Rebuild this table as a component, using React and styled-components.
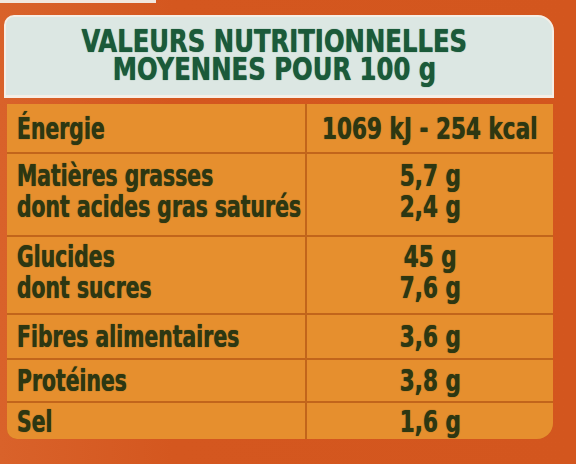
import React from 'react'
import styled, { createGlobalStyle } from 'styled-components'

const rows = [
  { h: 48, labels: ['Énergie'], values: ['1069 kJ - 254 kcal'] },
  {
    h: 81,
    labels: ['Matières grasses', 'dont acides gras saturés'],
    values: ['5,7 g', '2,4 g']
  },
  { h: 76, labels: ['Glucides', 'dont sucres'], values: ['45 g', '7,6 g'] },
  { h: 43, labels: ['Fibres alimentaires'], values: ['3,6 g'] },
  { h: 41, labels: ['Protéines'], values: ['3,8 g'] },
  { h: 36, labels: ['Sel'], values: ['1,6 g'] }
]

const App = () => (
  <Page>
    <GlobalStyle />
    <TopEdge />
    <Header>
      <HeadLine>VALEURS NUTRITIONNELLES</HeadLine>
      <HeadLine>MOYENNES POUR 100 g</HeadLine>
    </Header>
    <Table rows={rows.map(r => `${r.h}px`).join(' ')}>
      {rows.map((row, i) => {
        const multi = row.labels.length > 1
        return (
          <React.Fragment key={i}>
            <Cell $multi={multi}>
              {row.labels.map(l => (
                <Line key={l}>{l}</Line>
              ))}
            </Cell>
            <Cell $value $multi={multi}>
              {row.values.map(v => (
                <Line key={v} $value>
                  {v}
                </Line>
              ))}
            </Cell>
          </React.Fragment>
        )
      })}
    </Table>
  </Page>
)
export default App

const GlobalStyle = createGlobalStyle`
  body {
    margin: 0;
    background: #d4581f;
  }
`

const Page = styled.div`
  width: 576px;
  height: 464px;
  overflow: hidden;
  background: linear-gradient(90deg, #d9622a 0%, #d4571f 30%, #d3561e 100%);
  font-family: 'DejaVu Sans Condensed', 'DejaVu Sans', sans-serif;
  font-weight: bold;
`

const TopEdge = styled.div`
  width: 156px;
  height: 3px;
  background: #f1e7de;
`

const Header = styled.div`
  box-sizing: border-box;
  display: flex;
  flex-direction: column;
  align-items: center;
  margin: 12px 22px 0 4px;
  height: 83px;
  border: 2px solid #f5eee6;
  border-bottom-width: 3px;
  border-radius: 10px 16px 0 0;
  background: #dce7e3;
  color: #1b5a3a;
  font-size: 32px;
  line-height: 28px;
  padding: 10px 10px 0 0;
  text-shadow: 0 0 1px #1b5a3a;
`

const HeadLine = styled.div`
  width: max-content;
  white-space: nowrap;
  transform: scaleX(0.845);
`

const Table = styled.div`
  display: grid;
  grid-template-columns: 298px minmax(0, 1fr);
  grid-template-rows: ${p => p.rows};
  gap: 2px;
  margin: 6px 23px 0 7px;
  background: #c2651b;
  border-radius: 0 0 16px 10px;
  overflow: hidden;
`

const Cell = styled.div`
  display: flex;
  flex-direction: column;
  justify-content: center;
  align-items: ${p => (p.$value ? 'center' : 'flex-start')};
  min-width: 0;
  background: #e68f2e;
  color: #2d3712;
  font-size: 30px;
  line-height: 31px;
  padding-left: ${p => (p.$value ? 0 : 10)}px;
  padding-bottom: ${p => (p.$multi ? 7 : 0)}px;
  text-shadow: 0 0 1px #2d3712;
`

const Line = styled.div`
  width: max-content;
  white-space: nowrap;
  transform: scaleX(${p => (p.$value ? 0.8 : 0.755)});
  transform-origin: ${p => (p.$value ? 'center' : 'left')};
`
